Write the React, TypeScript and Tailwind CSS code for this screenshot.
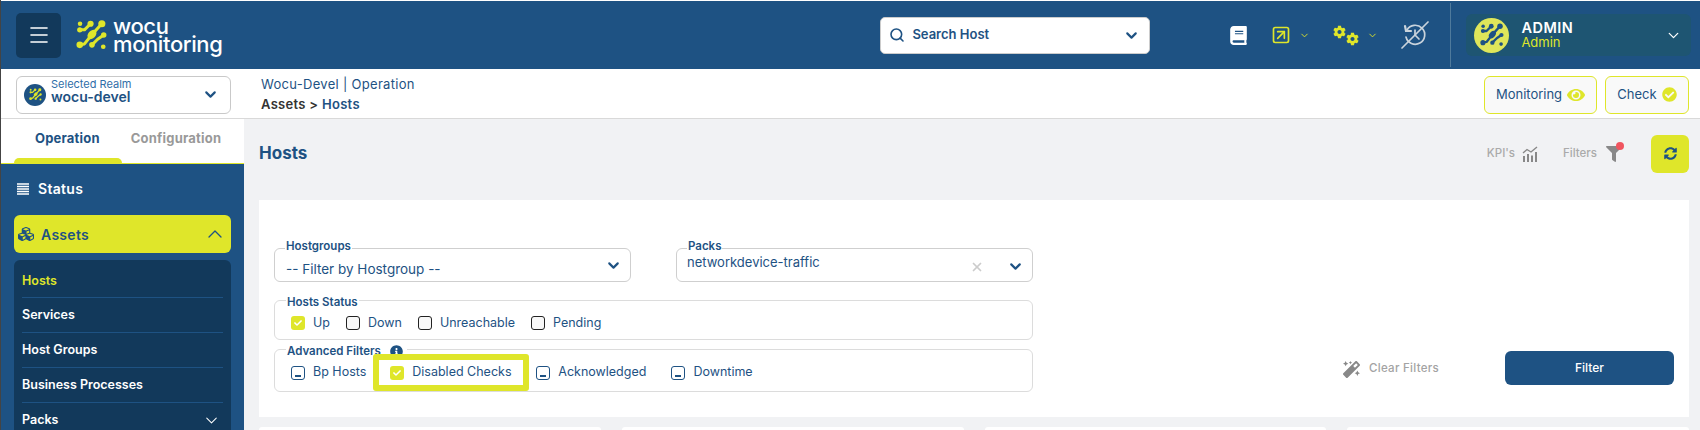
import { Menu, Search, ChevronDown, ChevronUp, SquareArrowUpRight, X } from 'lucide-react'
import { FaBook, FaCog, FaEye, FaCheckCircle, FaFilter, FaSyncAlt, FaMagic, FaCubes, FaInfoCircle, FaCheck } from 'react-icons/fa'

function LogoMark({ className }: { className?: string }) {
  return (
    <svg viewBox="3 3 33 33" className={className} fill="currentColor" stroke="currentColor" strokeLinecap="round" strokeLinejoin="round">
      <g fill="none" strokeWidth="3.2">
        <path d="M18.5 7.5 L12 14 H7" />
        <path d="M30.5 7.5 L20 19 L12 29 L7 30" />
        <path d="M32.5 19.5 L26 24 L20 30" />
      </g>
      <g stroke="none">
        <circle cx="7.3" cy="7.5" r="2.4" />
        <circle cx="18.5" cy="7.5" r="3.3" />
        <circle cx="30.5" cy="7.5" r="3.8" />
        <circle cx="7" cy="14" r="2.8" />
        <ellipse cx="20" cy="19" rx="4" ry="5.6" transform="rotate(42 20 19)" />
        <circle cx="32.5" cy="19.5" r="2.9" />
        <circle cx="7" cy="30" r="3.5" />
        <circle cx="20" cy="30" r="3" />
        <circle cx="32" cy="32" r="2.5" />
      </g>
    </svg>
  )
}

function HistorySlash() {
  return (
    <svg viewBox="0 0 28 28" className="w-[28px] h-[28px] text-[#c9d3dc]" fill="none" stroke="currentColor" strokeWidth="1.7" strokeLinecap="round">
      <path d="M6 9 A9.5 9.5 0 1 1 5 16" />
      <path d="M4 5 L5 10 L10 10" strokeWidth="2.2" />
      <path d="M14 9 V14 L18 18" />
      <path d="M27 1 L1 27" />
    </svg>
  )
}

function Box({ state }: { state: 'on' | 'off' | 'mid' }) {
  if (state === 'on') {
    return (
      <span className="w-[14px] h-[14px] rounded-[3px] bg-[#dfe62a] flex items-center justify-center shrink-0">
        <FaCheck className="w-[8px] h-[8px] text-white" />
      </span>
    )
  }
  if (state === 'off') {
    return <span className="w-[14px] h-[14px] rounded-[3px] border border-[#222] bg-[#f8f8f8] shrink-0" />
  }
  return (
    <span className="w-[14px] h-[14px] rounded-[3px] border border-[#1e5283] flex items-end justify-center pb-[2px] shrink-0">
      <span className="w-[6px] h-[2px] bg-[#1e5283]" />
    </span>
  )
}

function Check({ state, label, className }: { state: 'on' | 'off' | 'mid'; label: string; className?: string }) {
  return (
    <div className={`flex items-center gap-[8px] text-[12.5px] text-[#1e5283] ${className ?? ''}`}>
      <Box state={state} />
      <span>{label}</span>
    </div>
  )
}

const subItems = ['Services', 'Host Groups', 'Business Processes']

export default function App() {
  return (
    <div className="w-[1700px] h-[430px] overflow-hidden flex flex-col pt-px bg-white border-l border-[#444] font-['Inter',sans-serif] text-[#1e5283]">
      {/* top bar */}
      <header className="h-[68px] shrink-0 bg-[#1e5283] flex items-center">
        <button className="ml-[15px] w-[45px] h-[45px] rounded-[5px] bg-[#12395b] flex items-center justify-center text-white">
          <Menu className="w-[24px] h-[24px]" strokeWidth={1.6} />
        </button>
        <LogoMark className="ml-[15px] w-[31px] h-[32px] text-[#dfe62a]" />
        <div className="ml-[6px] text-white text-[22px] leading-[18px] font-medium tracking-[-0.4px]">
          <div>wocu</div>
          <div>monitoring</div>
        </div>
        <div className="ml-[658px] w-[270px] h-[37px] rounded-[5px] bg-white border border-[#ccc] flex items-center pl-[8px] pr-[9px] text-[#1e5283]">
          <Search className="w-[16px] h-[16px]" strokeWidth={2.4} />
          <span className="ml-[7px] text-[13px] font-semibold">Search Host</span>
          <ChevronDown className="ml-auto w-[17px] h-[17px]" strokeWidth={3} />
        </div>
        <FaBook className="ml-[80px] w-[17px] h-[19px] text-white" />
        <SquareArrowUpRight className="ml-[24px] w-[20px] h-[20px] text-[#dfe62a]" strokeWidth={2} />
        <ChevronDown className="ml-[8px] w-[11px] h-[11px] text-[#dfe62a]" />
        <div className="ml-[23px] w-[26px] h-[21px] flex justify-between text-[#dfe62a]">
          <FaCog className="w-[14px] h-[14px] self-start" />
          <FaCog className="w-[14px] h-[14px] self-end" />
        </div>
        <ChevronDown className="ml-[8px] w-[11px] h-[11px] text-[#dfe62a]" />
        <div className="ml-[23px]"><HistorySlash /></div>
        <div className="ml-[21px] self-stretch my-[2px] w-px bg-[#4f7a9c]" />
        <div className="ml-[15px] w-[225px] h-[42px] rounded-[6px] bg-[#1e5572] flex items-center pl-[8px] pr-[9px]">
          <div className="w-[35px] h-[35px] rounded-full bg-[#dfe65a] flex items-center justify-center text-[#1e5283]">
            <LogoMark className="w-[24px] h-[24px]" />
          </div>
          <div className="ml-[12px] flex flex-col">
            <span className="text-[14.5px] leading-[15px] font-semibold text-white tracking-[0.5px]">ADMIN</span>
            <span className="text-[13px] leading-[15px] text-[#dfe62a]">Admin</span>
          </div>
          <ChevronDown className="ml-auto w-[17px] h-[17px] text-white" strokeWidth={1.8} />
        </div>
      </header>

      {/* realm and breadcrumb bar */}
      <div className="h-[50px] shrink-0 bg-white border-b border-[#d9d9d9] flex items-center pt-[2px]">
        <div className="ml-[15px] w-[215px] h-[38px] rounded-[6px] border border-[#c9c9c9] flex items-center pl-[7px] pr-[11px]">
          <div className="w-[22px] h-[22px] rounded-full bg-[#1e5283] flex items-center justify-center text-[#dfe62a]">
            <LogoMark className="w-[13px] h-[13px]" />
          </div>
          <div className="ml-[5px] -mt-[9px] flex flex-col">
            <span className="text-[11px] leading-[12px] text-[#2f6ea8]">Selected Realm</span>
            <span className="text-[14px] leading-[13px] font-semibold text-[#1e5283]">wocu-devel</span>
          </div>
          <ChevronDown className="ml-auto w-[17px] h-[17px]" strokeWidth={3} />
        </div>
        <div className="ml-[30px] -mt-[2px] text-[13px] leading-[20px] tracking-[0.3px]">
          <div>Wocu-Devel | Operation</div>
          <div className="font-semibold"><span className="text-[#333]">Assets &gt;</span> Hosts</div>
        </div>
        <button className="ml-auto w-[113px] h-[38px] rounded-[6px] border border-[#dfe62a] bg-[#f9f9f9] flex items-center justify-center gap-[5px] text-[13px]">
          Monitoring
          <FaEye className="w-[18px] h-[16px] text-[#dfe62a]" />
        </button>
        <button className="ml-[8px] mr-[11px] w-[84px] h-[38px] rounded-[6px] border border-[#dfe62a] bg-[#f9f9f9] flex items-center justify-center gap-[5px] text-[13px]">
          Check
          <FaCheckCircle className="w-[15px] h-[15px] text-[#dfe62a]" />
        </button>
      </div>

      <div className="flex-1 flex min-h-0">
        {/* sidebar */}
        <aside className="w-[243px] shrink-0 bg-[#1e5283] flex flex-col overflow-hidden">
          <div className="h-[45px] shrink-0 bg-white border-b border-[#dfe62a] flex flex-col">
            <div className="flex-1 flex items-center text-[13px] font-bold tracking-[0.2px]">
              <span className="ml-[34px]">Operation</span>
              <span className="ml-[31px] text-[#999]">Configuration</span>
            </div>
            <div className="ml-[13px] w-[108px] h-[5px] rounded-t-[5px] bg-[#dfe62a]" />
          </div>
          <div className="h-[51px] shrink-0 flex items-center pl-[16px] pb-[2px] text-white text-[14px] font-semibold tracking-[0.3px]">
            <svg viewBox="0 0 12 12" className="w-[12px] h-[12px]" stroke="currentColor" strokeWidth="1.3">
              <path d="M0 1H12M0 3.5H12M0 6H12M0 8.5H12M0 11H12" />
            </svg>
            <span className="ml-[9px]">Status</span>
          </div>
          <div className="mx-[13px] h-[38px] shrink-0 rounded-[6px] bg-[#dfe62a] flex items-center pl-[4px] pr-[4px] text-[14px] font-semibold tracking-[0.3px]">
            <FaCubes className="w-[16px] h-[16px]" />
            <span className="ml-[7px]">Assets</span>
            <ChevronUp className="ml-auto w-[24px] h-[24px]" strokeWidth={1.3} />
          </div>
          <div className="mx-[13px] mt-[7px] flex-1 rounded-t-[6px] bg-[#12395b] px-[8px] text-[12.5px] font-semibold text-white">
            <div className="h-[38px] flex items-center pt-[5px] border-b border-[#1e5283] text-[#dfe62a]">Hosts</div>
            {subItems.map((item) => (
              <div key={item} className="h-[35px] flex items-center border-b border-[#1e5283]">{item}</div>
            ))}
            <div className="h-[35px] flex items-center">
              Packs
              <ChevronDown className="ml-auto mr-[2px] w-[19px] h-[19px]" strokeWidth={1.3} />
            </div>
          </div>
        </aside>

        {/* main content */}
        <main className="flex-1 min-w-0 bg-[#f1f2f4] pl-[15px] pr-[11px] flex flex-col">
          <div className="h-[81px] shrink-0 flex items-center pb-[1px]">
            <h1 className="text-[17px] font-bold pb-[11px]">Hosts</h1>
            <span className="ml-auto text-[11.5px] font-medium text-[#aaa] pb-[10px]">KPI's</span>
            <svg viewBox="0 0 16 16" className="ml-[7px] mb-[11px] w-[16px] h-[16px] text-[#888]" fill="none" stroke="currentColor" strokeWidth="1.4">
              <path d="M1 7 L5 3.5 L9 6 L15 1" />
              <path d="M2 16V10M6 16V8M10 16V9.5M14 16V6" strokeWidth="2" />
            </svg>
            <span className="ml-[25px] text-[11.5px] font-medium text-[#aaa] pb-[10px]">Filters</span>
            <div className="relative ml-[9px] mb-[11px]">
              <FaFilter className="w-[16px] h-[16px] text-[#888]" />
              <span className="absolute -top-[4px] -right-[2px] w-[8px] h-[8px] rounded-full bg-[#f0555f]" />
            </div>
            <button className="ml-[29px] w-[38px] h-[38px] rounded-[6px] bg-[#dfe62a] flex items-center justify-center mb-[11px]">
              <FaSyncAlt className="w-[13px] h-[13px]" />
            </button>
          </div>

          <section className="h-[217px] shrink-0 bg-white flex pl-[15px] pr-[15px]">
            <div className="w-[759px] shrink-0 pt-[37px]">
              <div className="flex justify-between">
                <fieldset className="w-[357px] h-[45px] rounded-[6px] border border-[#cfcfcf] px-[11px]">
                  <legend className="px-[1px] -ml-[1px] pb-[4px] text-[11.5px] font-semibold leading-[18px]">Hostgroups</legend>
                  <div className="flex items-center text-[13.5px]">
                    -- Filter by Hostgroup --
                    <ChevronDown className="ml-auto -mr-[3px] -mt-[8px] w-[17px] h-[17px]" strokeWidth={3} />
                  </div>
                </fieldset>
                <fieldset className="w-[357px] h-[45px] rounded-[6px] border border-[#cfcfcf] px-[10px]">
                  <legend className="px-[1px] pb-[4px] text-[11.5px] font-semibold leading-[18px]">Packs</legend>
                  <div className="flex items-center -mt-[8px] text-[13px]">
                    networkdevice-traffic
                    <X className="ml-auto mt-[7px] w-[14px] h-[14px] text-[#ccc]" strokeWidth={3} />
                    <ChevronDown className="ml-[23px] -mr-[2px] mt-[7px] w-[17px] h-[17px]" strokeWidth={3} />
                  </div>
                </fieldset>
              </div>
              <fieldset className="mt-[7px] h-[51px] rounded-[6px] border border-[#dcdcdc] px-[16px]">
                <legend className="px-[1px] -ml-[5px] pt-[4px] text-[11.5px] font-semibold leading-[18px]">Hosts Status</legend>
                <div className="flex items-center mt-[3px]">
                  <Check state="on" label="Up" />
                  <Check state="off" label="Down" className="ml-[16px]" />
                  <Check state="off" label="Unreachable" className="ml-[16px]" />
                  <Check state="off" label="Pending" className="ml-[16px]" />
                </div>
              </fieldset>
              <fieldset className="-mt-[2px] h-[54px] rounded-[6px] border border-[#dcdcdc] px-[16px]">
                <legend className="px-[1px] -ml-[5px] pt-[4px] text-[11.5px] font-semibold leading-[18px] flex items-center gap-[9px] pr-[4px]">
                  Advanced Filters
                  <FaInfoCircle className="w-[13px] h-[13px]" />
                </legend>
                <div className="flex items-center -mt-[6px]">
                  <Check state="mid" label="Bp Hosts" />
                  <Check state="on" label="Disabled Checks" className="ml-[7px] w-[156px] h-[37px] pl-[11px] border-[6px] border-[#dfe62a] rounded-[3px] bg-white relative" />
                  <Check state="mid" label="Acknowledged" className="ml-[7px]" />
                  <Check state="mid" label="Downtime" className="ml-[25px]" />
                </div>
              </fieldset>
            </div>
            <div className="flex-1 flex items-start pt-[151px]">
              <div className="ml-[310px] h-[36px] flex items-center text-[11.5px] font-medium tracking-[0.3px] text-[#a3a3a3]">
                <FaMagic className="w-[17px] h-[17px] text-[#888]" />
                <span className="ml-[9px]">Clear Filters</span>
              </div>
              <button className="ml-auto w-[169px] h-[34px] rounded-[6px] bg-[#1e5283] text-white text-[12px] font-medium">Filter</button>
            </div>
          </section>

          {/* cards below, cut off by the window */}
          <div className="mt-[10px] flex-1 flex gap-[21px]">
            <div className="flex-1 rounded-t-[8px] bg-white" />
            <div className="flex-1 rounded-t-[8px] bg-white" />
            <div className="flex-1 rounded-t-[8px] bg-white" />
            <div className="flex-1 rounded-t-[8px] bg-white" />
          </div>
        </main>
      </div>
    </div>
  )
}
